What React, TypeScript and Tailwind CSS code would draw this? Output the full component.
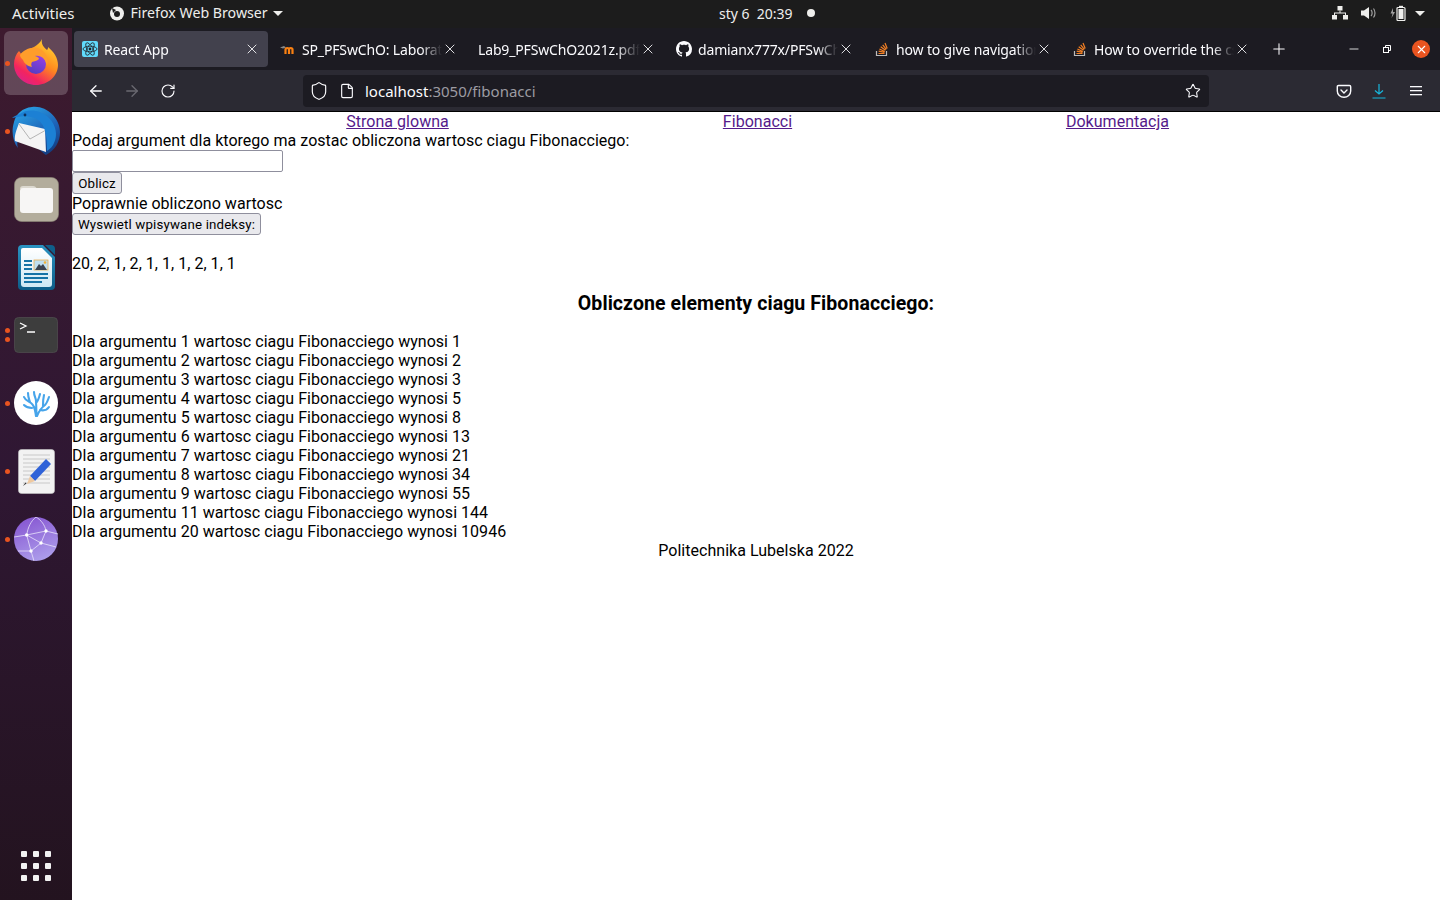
import { ReactNode } from "react";
import { X, ArrowLeft, ArrowRight, RotateCw, Plus, Minus, Star, Shield, File } from "lucide-react";

const tabs = [
  { title: "React App", icon: "react", active: true },
  { title: "SP_PFSwChO: Laboratorium", icon: "moodle" },
  { title: "Lab9_PFSwChO2021z.pdf", icon: "" },
  { title: "damianx777x/PFSwChO", icon: "github" },
  { title: "how to give navigation", icon: "so" },
  { title: "How to override the css", icon: "so" },
];

const results = [
  [1, 1], [2, 2], [3, 3], [4, 5], [5, 8], [6, 13], [7, 21], [8, 34], [9, 55], [11, 144], [20, 10946],
];

function TabIcon({ kind }: { kind: string }) {
  if (kind === "react")
    return (
      <svg width="16" height="16" viewBox="0 0 16 16" className="shrink-0 mr-[6px]">
        <rect width="16" height="16" rx="2" fill="#61dafb" />
        <g fill="none" stroke="#20232a" strokeWidth="0.8">
          <ellipse cx="8" cy="8" rx="7" ry="2.8" />
          <ellipse cx="8" cy="8" rx="7" ry="2.8" transform="rotate(60 8 8)" />
          <ellipse cx="8" cy="8" rx="7" ry="2.8" transform="rotate(120 8 8)" />
        </g>
        <circle cx="8" cy="8" r="1.4" fill="#20232a" />
      </svg>
    );
  if (kind === "moodle")
    return (
      <svg width="16" height="16" viewBox="0 0 16 16" className="shrink-0 mr-[6px]">
        <path d="M0 6.5l4-1.5 2 1.5-3 1z" fill="#8a8a8a" />
        <path d="M4 13V8.5c0-2 3.5-2 3.5 0V13M7.5 13V8.5c0-2 3.5-2 3.5 0V13" transform="translate(1.5 0)" fill="none" stroke="#f98012" strokeWidth="2.2" />
      </svg>
    );
  if (kind === "github")
    return (
      <svg width="16" height="16" viewBox="0 0 16 16" className="shrink-0 mr-[6px]" fill="#fbfbfe">
        <path d="M8 0C3.58 0 0 3.58 0 8c0 3.54 2.29 6.53 5.47 7.59.4.07.55-.17.55-.38 0-.19-.01-.82-.01-1.49-2.01.37-2.53-.49-2.69-.94-.09-.23-.48-.94-.82-1.13-.28-.15-.68-.52-.01-.53.63-.01 1.08.58 1.23.82.72 1.21 1.87.87 2.33.66.07-.52.28-.87.51-1.07-1.78-.2-3.64-.89-3.64-3.95 0-.87.31-1.59.82-2.15-.08-.2-.36-1.02.08-2.12 0 0 .67-.21 2.2.82.64-.18 1.32-.27 2-.27s1.36.09 2 .27c1.53-1.04 2.2-.82 2.2-.82.44 1.1.16 1.92.08 2.12.51.56.82 1.27.82 2.15 0 3.07-1.87 3.75-3.65 3.95.29.25.54.73.54 1.48 0 1.07-.01 1.93-.01 2.2 0 .21.15.46.55.38A8.01 8.01 0 0 0 16 8c0-4.42-3.58-8-8-8z" />
      </svg>
    );
  if (kind === "so")
    return (
      <svg width="16" height="16" viewBox="0 0 16 16" className="shrink-0 mr-[6px]">
        <path d="M2.5 10v4.5h10V10" fill="none" stroke="#bcbbbb" strokeWidth="1.2" />
        <path d="M4.5 12.5h6M4.7 10.2l5.8 1.2M5.4 8l5.4 2.5M6.7 5.8l4.8 3.5M8.7 3.8l3.6 4.5M11 2l2.2 5.4" fill="none" stroke="#f48024" strokeWidth="1.2" />
      </svg>
    );
  return null;
}

function Tab({ title, icon, active }: { title: string; icon: string; active?: boolean }) {
  return (
    <div className={`w-[194px] h-9 shrink-0 rounded flex items-center pl-2 pr-2 ${active ? "bg-[#42414d]" : ""}`}>
      <TabIcon kind={icon} />
      <span className="flex-1 min-w-0 overflow-hidden whitespace-nowrap text-[14px] tracking-[-0.15px] text-[#fbfbfe] [mask-image:linear-gradient(to_right,black_85%,transparent)]">
        {title}
      </span>
      <X size={16} strokeWidth={1.3} className="text-[#fbfbfe] shrink-0" />
    </div>
  );
}

function DockItem({ dots = 0, active, children }: { dots?: number; active?: boolean; children: ReactNode }) {
  return (
    <div className="relative h-[68px] w-[72px] flex items-center justify-center">
      {active && <div className="absolute left-1 right-1 top-[2px] bottom-[2px] rounded-md bg-white/20" />}
      <div className="absolute left-[5px] top-0 bottom-0 flex flex-col justify-center gap-[4px]">
        {Array.from({ length: dots }).map((_, i) => (
          <span key={i} className="block w-[5px] h-[5px] rounded-full bg-[#e95420]" />
        ))}
      </div>
      <div className="relative">{children}</div>
    </div>
  );
}

function FirefoxIcon() {
  return (
    <svg width="46" height="48" viewBox="0 0 46 48" className="-mt-[3px]">
      <defs>
        <linearGradient id="ffa" x1="0.85" y1="0" x2="0.2" y2="1">
          <stop offset="0" stopColor="#ffdd35" />
          <stop offset="0.45" stopColor="#ff8a1e" />
          <stop offset="0.78" stopColor="#f3245f" />
          <stop offset="1" stopColor="#d9218f" />
        </linearGradient>
        <linearGradient id="ffb" x1="0.7" y1="0" x2="0.2" y2="1">
          <stop offset="0" stopColor="#9a3fe6" />
          <stop offset="1" stopColor="#4f3dc0" />
        </linearGradient>
      </defs>
      <path d="M29 1c-1 4 1 8 5 11 1-1 1-2 1-3 6 5 10 11 10 18 0 11-10 20-22 20S1 38 1 26c0-5 2-10 5-13l3 4c2-4 7-6 12-8 3-2 6-4 8-8z" fill="url(#ffa)" />
      <circle cx="23" cy="26" r="10" fill="url(#ffb)" />
      <path d="M7 17c4-6 13-9 20-6 6 3 9 10 7 17-1-7-6-11-12-10 3 1 4 2 4 3-2 2-5 2-7 3-1 2-1 3 0 5-5-1-8-4-9-7-1-1-3-3-3-5z" fill="#ff9d2b" />
    </svg>
  );
}

function ThunderbirdIcon() {
  return (
    <svg width="48" height="50" viewBox="0 0 48 50">
      <defs>
        <linearGradient id="tb" x1="0.2" y1="0" x2="0.8" y2="1">
          <stop offset="0" stopColor="#2aa3e6" />
          <stop offset="0.6" stopColor="#1d5fb4" />
          <stop offset="1" stopColor="#123a7c" />
        </linearGradient>
      </defs>
      <path d="M20 1C10 2 4 8 2 16-1 26 1 36 6 42c-1-3-1-5 0-7l18 6c2 1 8 7 10 8 9-5 14-13 14-23C48 12 34-1 20 1z" fill="url(#tb)" />
      <path d="M7 17l26 6 1 23-31-11c-1-6 2-12 4-18z" fill="#f4f4f4" />
      <path d="M7 18l11 15 16-9" fill="none" stroke="#a3a3a3" strokeWidth="0.8" />
      <path d="M8 8c8-6 21-4 29 4 7 7 9 17 5 25-1 3-4 6-7 8 0-6 0-16-3-23-2-6-7-10-13-11-5-1-9-1-13 0l-6 1c2-2 5-3 8-4z" fill="#1c80d4" />
      <circle cx="13" cy="9" r="1.4" fill="#0c2f5c" />
    </svg>
  );
}

function FilesIcon() {
  return (
    <svg width="45" height="45" viewBox="0 0 45 45">
      <rect x="0.5" y="0.5" width="44" height="44" rx="7" fill="#b3ad9c" stroke="#8e8978" strokeWidth="0.6" />
      <path d="M6 12c0-2 1-3 3-3h10c2 0 3 1 4 3z" fill="#dcd9d0" />
      <rect x="6" y="11" width="33" height="25" rx="3" fill="#f7f6f5" />
    </svg>
  );
}

function WriterIcon() {
  return (
    <svg width="37" height="45" viewBox="0 0 37 45">
      <defs>
        <linearGradient id="wr" x1="0" y1="0" x2="0" y2="1">
          <stop offset="0" stopColor="#2a93c2" />
          <stop offset="1" stopColor="#0d5d88" />
        </linearGradient>
        <linearGradient id="wp" x1="0" y1="0" x2="0" y2="1">
          <stop offset="0" stopColor="#ffffff" />
          <stop offset="1" stopColor="#cfe8f4" />
        </linearGradient>
      </defs>
      <path d="M4 0H25L37 12V41a4 4 0 0 1-4 4H4a4 4 0 0 1-4-4V4a4 4 0 0 1 4-4z" fill="url(#wr)" />
      <path d="M5 3H24L34 13V39a3 3 0 0 1-3 3H6a3 3 0 0 1-3-3V5a2 2 0 0 1 2-2z" fill="url(#wp)" />
      <path d="M27 0h6a4 4 0 0 1 4 4v6z" fill="#0f5f8a" />
      <path d="M6 15h8v2H6zM6 19h8v2H6zM6 23h8v2H6zM6 28h24v2H6zM6 32h24v2H6zM6 36h18v2H6z" fill="#1673a6" />
      <rect x="16" y="15" width="14" height="10" fill="#bfe0f0" stroke="#e9a73c" strokeWidth="0.7" />
      <path d="M17 25l4-6 2 2 2-2 4 6z" fill="#3b4450" />
      <circle cx="27" cy="17.5" r="1.3" fill="#f2b233" />
    </svg>
  );
}

function TerminalIcon() {
  return (
    <svg width="44" height="36" viewBox="0 0 44 36">
      <rect x="0.5" y="0.5" width="43" height="35" rx="4" fill="#3d3d3d" stroke="#565656" strokeWidth="0.6" />
      <path d="M6 6l6 3-6 3" fill="none" stroke="#fff" strokeWidth="1.3" />
      <path d="M13 15h8" stroke="#fff" strokeWidth="1.5" />
    </svg>
  );
}

function CoralIcon() {
  return (
    <svg width="44" height="44" viewBox="0 0 44 44">
      <circle cx="22" cy="22" r="22" fill="#fff" />
      <g fill="none" stroke="#46a4ea" strokeWidth="2.1" strokeLinecap="round">
        <path d="M22 35c-1-6-1-10-5-13-3-2-6-3-7-6M16 21c-1-3-2-5-2-9M22 35c1-6 0-10 0-15 0-3-2-5-2-9M22 22c2-2 3-5 4-9M23 35c2-5 4-8 8-11 2-2 3-5 4-8M29 25c0-4 0-7 1-11M26 29c4 1 7 0 9-3M18 27c-3 0-6-1-8-3" />
      </g>
    </svg>
  );
}

function EditorIcon() {
  return (
    <svg width="37" height="45" viewBox="0 0 37 45">
      <rect x="0.5" y="0.5" width="36" height="44" rx="3" fill="#f2f2f2" stroke="#c4c4c4" strokeWidth="0.6" />
      <path d="M5 6h27M5 10h27M5 14h27M5 18h27M5 22h27M5 26h27M5 30h27M5 34h27" stroke="#c8c8c8" strokeWidth="1" />
      <path d="M12 27l16-17 5 5-16 17z" fill="#2f62d8" />
      <path d="M12 27l5 5-8 3z" fill="#efc9a0" />
      <path d="M5 37l3.5-2.5-1-1z" fill="#333" />
    </svg>
  );
}

function GlobeIcon() {
  return (
    <svg width="44" height="44" viewBox="0 0 44 44">
      <defs>
        <linearGradient id="gl" x1="0.3" y1="0" x2="0.7" y2="1">
          <stop offset="0" stopColor="#8757d2" />
          <stop offset="1" stopColor="#aea0ec" />
        </linearGradient>
      </defs>
      <circle cx="22" cy="22" r="22" fill="url(#gl)" />
      <g fill="none" stroke="#e9e3fa" strokeWidth="0.8">
        <path d="M0 20l12.7-2L32 14l12 3M12.7 18L27 26l15 4M12.7 18L17 34M27 26l-10 8-13 0M32 14L27 26M17 34l3 10M12.7 18C14 10 17 4 22 0M32 14c-1-6-5-11-10-14" />
      </g>
      <g fill="#ffffff">
        <circle cx="12.7" cy="18" r="1.7" />
        <circle cx="32" cy="14" r="1.7" />
        <circle cx="27" cy="26" r="1.7" />
        <circle cx="17" cy="34" r="1.7" />
      </g>
    </svg>
  );
}

export default function App() {
  return (
    <div className="h-screen w-[1440px] overflow-hidden flex flex-col bg-white font-['Noto_Sans',sans-serif]">
      <header className="h-7 shrink-0 bg-[#1c1c1c] text-[#eeeeec] text-[14.2px] flex items-center relative pb-[2px]">
        <span className="ml-3 text-[15px]">Activities</span>
        <svg width="16" height="16" viewBox="0 0 16 16" className="ml-[34px]">
          <circle cx="8" cy="8.5" r="7" fill="#eeeeec" />
          <circle cx="8" cy="9" r="3" fill="#1c1c1c" />
          <path d="M3 3l4 2-3 3z" fill="#1c1c1c" />
        </svg>
        <span className="ml-[6px]">Firefox Web Browser</span>
        <span className="ml-[5px] w-0 h-0 border-x-[5px] border-x-transparent border-t-[5px] border-t-[#eeeeec]" />
        <div className="absolute left-[719px] top-0 h-[26px] flex items-center gap-[14px] text-[14px]">
          <span className="whitespace-pre">sty 6  20:39</span>
          <span className="w-2 h-2 rounded-full bg-[#eeeeec]" />
        </div>
        <div className="ml-auto flex items-center gap-[13px] pr-[15px]">
          <svg width="16" height="14" viewBox="0 0 16 14" fill="#eeeeec">
            <rect x="5.5" y="0" width="5" height="4.5" />
            <rect x="0" y="9" width="5" height="4.5" />
            <rect x="11" y="9" width="5" height="4.5" />
            <path d="M7.5 4.5h1V6.5h5.5V9h-1V7.5H3V9H2V6.5h5.5z" />
          </svg>
          <svg width="16" height="14" viewBox="0 0 16 14">
            <path d="M0 4.5h3L8 1v12L3 9.5H0z" fill="#eeeeec" />
            <path d="M10 4c1.5 1.5 1.5 4.5 0 6M12.5 2.5c2 2.5 2 6.5 0 9" fill="none" stroke="#a0a0a0" strokeWidth="1.2" />
          </svg>
          <svg width="16" height="16" viewBox="0 0 16 16">
            <path d="M3 3L0.5 8.5H2.5L1.5 13 5 7H3z" fill="#a0a0a0" />
            <rect x="7" y="2.5" width="8" height="13" rx="1" fill="none" stroke="#eeeeec" strokeWidth="1.2" />
            <rect x="9" y="0.8" width="4" height="1.7" fill="#eeeeec" />
            <rect x="8.5" y="4" width="5" height="10" fill="#eeeeec" />
          </svg>
          <span className="-ml-[4px] w-0 h-0 border-x-[5px] border-x-transparent border-t-[5px] border-t-[#eeeeec]" />
        </div>
      </header>

      <div className="flex-1 flex min-h-0">
        <aside className="w-[72px] shrink-0 bg-gradient-to-b from-[#3d1a2e] via-[#2f1733] to-[#23131f] flex flex-col pt-px relative">
          <DockItem dots={1} active><FirefoxIcon /></DockItem>
          <DockItem dots={1}><ThunderbirdIcon /></DockItem>
          <DockItem><FilesIcon /></DockItem>
          <DockItem><WriterIcon /></DockItem>
          <DockItem dots={2}><TerminalIcon /></DockItem>
          <DockItem dots={1}><CoralIcon /></DockItem>
          <DockItem dots={1}><EditorIcon /></DockItem>
          <DockItem dots={1}><GlobeIcon /></DockItem>
          <div className="mt-auto mb-[19px] mx-auto grid grid-cols-3 gap-[6px]">
            {Array.from({ length: 9 }).map((_, i) => (
              <span key={i} className="block w-[6px] h-[6px] rounded-[1px] bg-[#f2f2f2]" />
            ))}
          </div>
        </aside>

        <main className="flex-1 min-w-0 flex flex-col">
          <div className="h-[42px] shrink-0 bg-[#1c1b22] flex items-center pl-[2px] gap-[4px]">
            {tabs.map((t) => (
              <Tab key={t.title} title={t.title} icon={t.icon} active={t.active} />
            ))}
            <Plus size={18} strokeWidth={1.4} className="text-[#fbfbfe] ml-[8px] shrink-0" />
            <div className="ml-auto flex items-center pr-[10px]">
              <Minus size={14} strokeWidth={1.4} className="text-white mr-[22px]" />
              <svg width="8" height="8" viewBox="0 0 8 8" className="mr-[21px]" fill="none" stroke="#fff" strokeWidth="1">
                <rect x="0.5" y="2.5" width="5" height="5" />
                <path d="M2.5 2.5V0.5h5v5h-2" />
              </svg>
              <span className="w-[18px] h-[18px] rounded-full bg-[#e95420] flex items-center justify-center">
                <X size={13} strokeWidth={2} className="text-white" />
              </span>
            </div>
          </div>

          <div className="h-[42px] shrink-0 bg-[#2b2a33] border-b border-black flex items-center pt-px pl-[15px] pr-[15px] text-[#fbfbfe]">
            <ArrowLeft size={18} strokeWidth={1.7} />
            <ArrowRight size={18} strokeWidth={1.7} className="ml-[18px] text-[#6b6a72]" />
            <RotateCw size={16} strokeWidth={1.7} className="ml-[19px]" />
            <div className="ml-[127px] w-[906px] h-8 shrink-0 rounded bg-[#1c1b22] flex items-center pl-[6px] pr-[8px]">
              <Shield size={20} strokeWidth={1.4} />
              <File size={16} strokeWidth={1.7} className="ml-[10px]" />
              <span className="ml-[10px] text-[15px]">localhost<span className="text-[#9c9ba2]">:3050/fibonacci</span></span>
              <Star size={16} strokeWidth={1.6} className="ml-auto" />
            </div>
            <svg width="16" height="15" viewBox="0 0 16 15" className="ml-[127px]" fill="none" stroke="#fbfbfe" strokeWidth="1.4">
              <path d="M2.5 1.5h11c.7 0 1.2.5 1.2 1.2V7c0 3.5-3 6.3-6.7 6.3S1.3 10.5 1.3 7V2.7c0-.7.5-1.2 1.2-1.2z" />
              <path d="M5 6l3 3 3-3" strokeLinecap="round" />
            </svg>
            <svg width="16" height="16" viewBox="0 0 16 16" className="ml-[19px]" fill="none" stroke="#17b6dc" strokeWidth="1.2">
              <path d="M8 1v10M4 7.5L8 11l4-3.5M1.5 15h13" />
            </svg>
            <svg width="12" height="10" viewBox="0 0 12 10" className="ml-[23px]" fill="#fbfbfe">
              <rect y="0" width="12" height="1.3" />
              <rect y="4" width="12" height="1.3" />
              <rect y="8" width="12" height="1.3" />
            </svg>
          </div>

          <div className="flex-1 bg-white text-black font-['Roboto',sans-serif] text-[16px] tracking-[0.03px] leading-[19px] min-h-0">
            <nav className="flex justify-center pl-[3px]">
              {["Strona glowna", "Fibonacci", "Dokumentacja"].map((l) => (
                <div key={l} className="w-[360px] text-center">
                  <a href="#" className="text-[#551a8b] underline">{l}</a>
                </div>
              ))}
            </nav>
            <div>Podaj argument dla ktorego ma zostac obliczona wartosc ciagu Fibonacciego:</div>
            <div className="w-[211px] h-[22px] border border-[#8f8f9d] rounded-[2px] bg-white" />
            <button className="block w-[50px] h-[22px] pt-px text-[13.3px] tracking-[0.15px] leading-[19px] bg-[#e9e9ed] border border-[#8f8f9d] rounded-[3px]">Oblicz</button>
            <div>Poprawnie obliczono wartosc</div>
            <button className="block w-[189px] h-[22px] pt-px whitespace-nowrap text-[13.3px] tracking-[0.15px] leading-[19px] bg-[#e9e9ed] border border-[#8f8f9d] rounded-[3px]">Wyswietl wpisywane indeksy:</button>
            <p className="mt-[19px]">20, 2, 1, 2, 1, 1, 1, 2, 1, 1</p>
            <h3 className="mt-[19px] mb-[17px] text-center text-[19.5px] tracking-[0.08px] leading-[23px] font-bold">Obliczone elementy ciagu Fibonacciego:</h3>
            {results.map(([a, v]) => (
              <div key={a}>Dla argumentu {a} wartosc ciagu Fibonacciego wynosi {v}</div>
            ))}
            <div className="text-center">Politechnika Lubelska 2022</div>
          </div>
        </main>
      </div>
    </div>
  );
}
